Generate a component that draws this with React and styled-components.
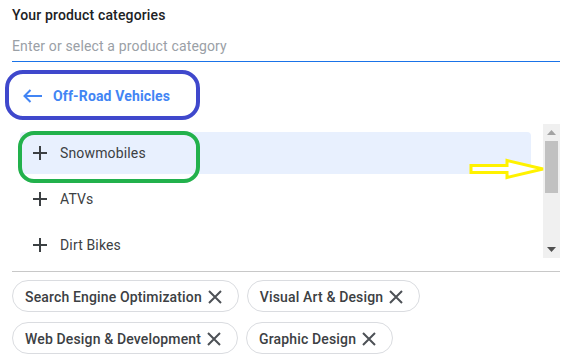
import React from 'react';
import styled, { createGlobalStyle } from 'styled-components';

const GlobalStyle = createGlobalStyle`
  html, body {
    margin: 0;
    padding: 0;
    background: #fff;
  }
  #root {
    position: relative;
    width: 575px;
    height: 355px;
    overflow: hidden;
  }
`;

const Page = styled.div`
  padding: 5px 15px 0 12px;
  font-family: Roboto, 'Liberation Sans', sans-serif;
  font-size: 14px;
  line-height: 20px;
  letter-spacing: 0.15px;
  color: #3c4043;
`;

const Label = styled.div`
  height: 20px;
  font-weight: 500;
  color: #202124;
`;

const Input = styled.div`
  height: 37px;
  box-sizing: border-box;
  padding-top: 11px;
  color: #9aa0a6;
  border-bottom: 1px solid #1a73e8;
`;

const BackRow = styled.div`
  height: 62px;
  box-sizing: border-box;
  padding: 6px 0 0 11px;
  display: flex;
  align-items: center;
  gap: 10px;
  color: #4285f4;
  font-weight: 700;
`;

const ListWrap = styled.div`
  height: 134px;
  display: flex;
`;

const List = styled.div`
  flex: 1;
  overflow: hidden;
  padding: 8px 12px 0 8px;
  display: flex;
  flex-direction: column;
  gap: 4px;
`;

const Row = styled.div`
  flex: none;
  height: 42px;
  display: flex;
  align-items: center;
  gap: 12px;
  padding-left: 12px;
  border-radius: 4px;
  background: ${p => (p.$active ? '#e8f0fe' : 'transparent')};
`;

const Scrollbar = styled.div`
  width: 17px;
  background: #f0f0f0;
  display: flex;
  flex-direction: column;
  align-items: center;
`;

const ScrollArrow = styled.div`
  height: 17px;
  width: 17px;
  display: flex;
  align-items: center;
  justify-content: center;
`;

const Thumb = styled.div`
  width: 13px;
  height: 52px;
  background: #c1c1c1;
`;

const Track = styled.div`
  flex: 1;
`;

const Divider = styled.div`
  margin-top: 13px;
  height: 1px;
  background: #c8c8c8;
`;

const Chips = styled.div`
  margin-top: 8px;
  display: flex;
  flex-wrap: wrap;
  gap: 10px 8px;
`;

const Chip = styled.div`
  height: 32px;
  box-sizing: border-box;
  border: 1px solid #dadce0;
  border-radius: 16px;
  padding: 1px 15px 0 12px;
  display: flex;
  align-items: center;
  gap: 5px;
  font-weight: 500;
  color: #3c4043;
`;

const Overlay = styled.svg`
  position: absolute;
  left: 0;
  top: 0;
  pointer-events: none;
`;

const BackArrow = () => (
  <svg width="20" height="14" viewBox="0 0 20 14">
    <path d="M1 7H19M7.5 1L1.5 7L7.5 13" fill="none" stroke="#4285f4" strokeWidth="2" />
  </svg>
);

const Plus = () => (
  <svg width="16" height="16" viewBox="0 0 16 16">
    <path d="M8 1V15M1 8H15" fill="none" stroke="#3c4043" strokeWidth="2" />
  </svg>
);

const Close = () => (
  <svg width="16" height="16" viewBox="0 0 16 16">
    <path d="M2 2L14 14M14 2L2 14" fill="none" stroke="#4d5156" strokeWidth="2" />
  </svg>
);

const items = ['Snowmobiles', 'ATVs', 'Dirt Bikes'];
const chips = [
  'Search Engine Optimization',
  'Visual Art & Design',
  'Web Design & Development',
  'Graphic Design'
];

export default function App() {
  return (
    <>
      <GlobalStyle />
      <Page>
        <Label>Your product categories</Label>
        <Input>Enter or select a product category</Input>
        <BackRow>
          <BackArrow />
          Off-Road Vehicles
        </BackRow>
        <ListWrap>
          <List>
            {items.map((item, i) => (
              <Row key={item} $active={i === 0}>
                <Plus />
                {item}
              </Row>
            ))}
          </List>
          <Scrollbar>
            <ScrollArrow>
              <svg width="9" height="5" viewBox="0 0 9 5">
                <path d="M0 5L4.5 0L9 5Z" fill="#a3a3a3" />
              </svg>
            </ScrollArrow>
            <Thumb />
            <Track />
            <ScrollArrow>
              <svg width="9" height="5" viewBox="0 0 9 5">
                <path d="M0 0L4.5 5L9 0Z" fill="#505050" />
              </svg>
            </ScrollArrow>
          </Scrollbar>
        </ListWrap>
        <Divider />
        <Chips>
          {chips.map(c => (
            <Chip key={c}>
              {c}
              <Close />
            </Chip>
          ))}
        </Chips>
      </Page>
      <Overlay width="575" height="355" viewBox="0 0 575 355">
        <rect x="7" y="72" width="191" height="46" rx="16" fill="none" stroke="#3f48cc" strokeWidth="4" />
        <rect x="20" y="133" width="178" height="48" rx="14" fill="none" stroke="#22b14c" strokeWidth="4" />
        <path
          d="M471 165.5H507V160.5L543 169L507 177.5V172.5H471Z"
          fill="#fff"
          stroke="#fff200"
          strokeWidth="3"
          strokeLinejoin="miter"
        />
      </Overlay>
    </>
  );
}
